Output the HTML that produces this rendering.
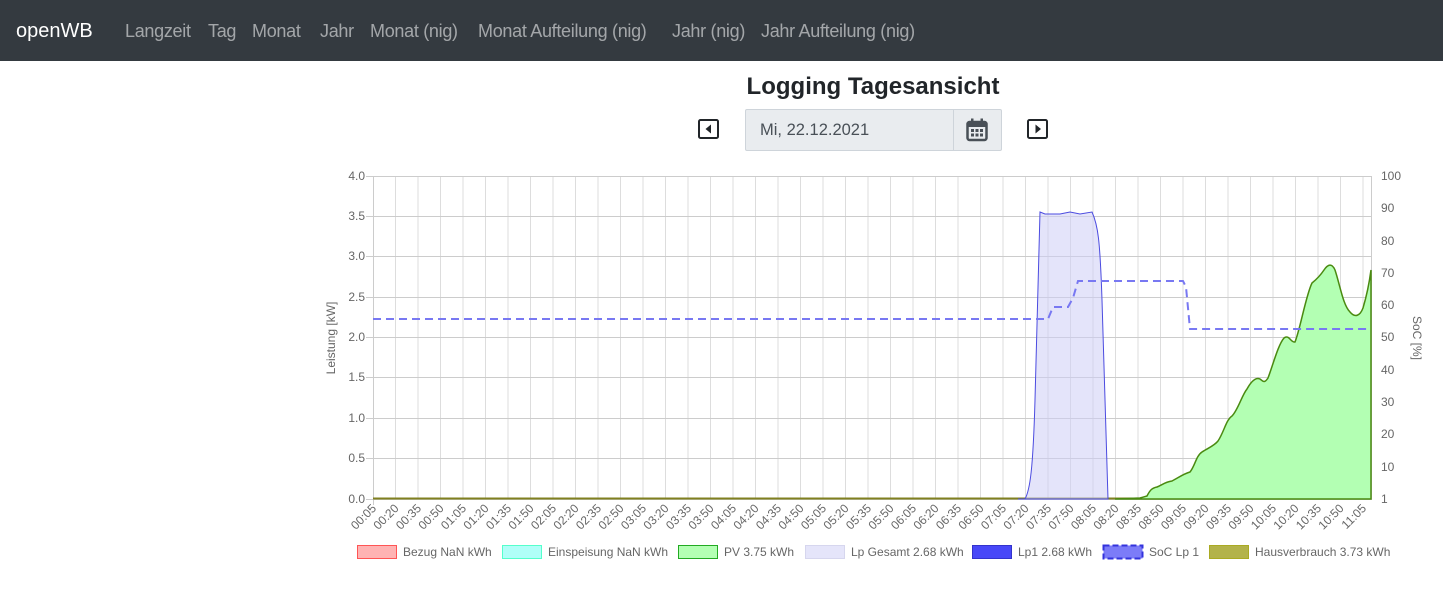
<!DOCTYPE html>
<html><head><meta charset="utf-8">
<style>
body{margin:0;width:1443px;height:610px;background:#fff;font-family:"Liberation Sans",sans-serif;position:relative;overflow:hidden}
.nav{position:absolute;left:0;top:0;width:1443px;height:61px;background:#343a40}
.nav span{position:absolute;top:21px;font-size:18px;color:rgba(255,255,255,.55);white-space:nowrap;letter-spacing:-0.3px}
.nav .brand{color:#fff;font-size:20px;top:20px;letter-spacing:0}
h1{position:absolute;left:0;width:1746px;text-align:center;top:73px;margin:0;font-size:24px;font-weight:bold;color:#212529}
.date{position:absolute;left:745px;top:109px;width:255px;height:40px;border:1px solid #ced4da;background:#e9ecef;border-radius:2px}
.date .t{position:absolute;left:14px;top:11px;font-size:16.5px;color:#495057}
.date .d{position:absolute;left:207px;top:0;width:1px;height:40px;background:#ced4da}
</style></head><body>
<div class="nav">
<span class="brand" style="left:16px">openWB</span>
<span style="left:125px">Langzeit</span>
<span style="left:208px">Tag</span>
<span style="left:252px">Monat</span>
<span style="left:320px">Jahr</span>
<span style="left:370px">Monat (nig)</span>
<span style="left:478px">Monat Aufteilung (nig)</span>
<span style="left:672px">Jahr (nig)</span>
<span style="left:761px">Jahr Aufteilung (nig)</span>
</div>
<h1>Logging Tagesansicht</h1>
<svg style="position:absolute;left:698px;top:119px" width="22" height="21" viewBox="0 0 22 21"><rect x="1" y="1" width="19" height="18" rx="1.5" fill="none" stroke="#212529" stroke-width="2"/><path d="M13 5.5 L7.5 10 L13 14.5Z" fill="#212529"/></svg>
<div class="date"><span class="t">Mi, 22.12.2021</span><div class="d"></div>
<svg style="position:absolute;left:220px;top:8px" width="22" height="24" viewBox="0 0 22 24"><rect x="1.5" y="4" width="19" height="18" rx="2" fill="none" stroke="#495057" stroke-width="2.5"/><rect x="1.5" y="4" width="19" height="5" fill="#495057"/><rect x="5" y="0.5" width="2.5" height="5" fill="#495057"/><rect x="14.5" y="0.5" width="2.5" height="5" fill="#495057"/><g fill="#495057"><rect x="5" y="11" width="3" height="3"/><rect x="9.5" y="11" width="3" height="3"/><rect x="14" y="11" width="3" height="3"/><rect x="5" y="15.5" width="3" height="3"/><rect x="9.5" y="15.5" width="3" height="3"/><rect x="14" y="15.5" width="3" height="3"/></g></svg>
</div>
<svg style="position:absolute;left:1027px;top:119px" width="22" height="21" viewBox="0 0 22 21"><rect x="1" y="1" width="19" height="18" rx="1.5" fill="none" stroke="#212529" stroke-width="2"/><path d="M8.5 5.5 L14 10 L8.5 14.5Z" fill="#212529"/></svg>

<svg style="position:absolute;left:0;top:0" width="1443" height="610" font-family="Liberation Sans, sans-serif" font-size="12" fill="#666">
<g stroke="#ddd" stroke-width="1">
<path d="M395.5 176V499M418 176V499M440.5 176V499M463 176V499M485.5 176V499M508 176V499M530.5 176V499M553 176V499M575.5 176V499M598 176V499M620.5 176V499M643 176V499M665.5 176V499M688 176V499M710.5 176V499M733 176V499M755.5 176V499M778 176V499M800.5 176V499M823 176V499M845.5 176V499M868 176V499M890.5 176V499M913 176V499M935.5 176V499M958 176V499M980.5 176V499M1003 176V499M1025.5 176V499M1048 176V499M1070.5 176V499M1093 176V499M1115.5 176V499M1138 176V499M1160.5 176V499M1183 176V499M1205.5 176V499M1228 176V499M1250.5 176V499M1273 176V499M1295.5 176V499M1318 176V499M1340.5 176V499M1363 176V499"/>
</g>
<g stroke="#ccc" stroke-width="1">
<path d="M366 176.5H1372M366 216.5H1372M366 256.5H1372M366 297.5H1372M366 337.5H1372M366 377.5H1372M366 418.5H1372M366 458.5H1372M366 499.5H1372"/>
<path d="M373.5 176V505M1371.5 176V499"/>
</g>
<path d="M373 498.5H1371" stroke="#808020" stroke-width="2"/>
<path d="M1018,499 L1025,499 C1030,490 1033,470 1035,400 L1040,212 L1045,214 L1060,214 L1070,212 L1080,214 L1092,212 C1098,225 1100,240 1102,300 L1108,499 Z" fill="rgba(205,205,245,0.55)" stroke="#4b4be0" stroke-width="1"/>
<path d="M1115,499 L1140,498 L1147,496 C1150,490 1152,488 1157,487 C1162,485 1165,482 1172,481 C1178,478 1183,474 1190,472 C1195,466 1196,456 1202,452 C1208,448 1214,446 1218,441 C1224,432 1226,420 1232,416 C1238,410 1242,395 1247,389 C1252,380 1256,377 1260,379 C1263,381 1264,384 1268,378 C1273,365 1278,345 1284,338 C1289,334 1291,343 1295,342 C1300,330 1306,295 1312,283 C1317,279 1320,276 1324,270 C1328,264 1332,263 1335,270 C1340,285 1343,305 1350,312 C1355,318 1360,316 1363,308 C1366,298 1369,285 1371,270 L1371,499 Z" fill="#b3ffb3" stroke="#4a8a10" stroke-width="1.5"/>
<path d="M373,319 L1048,319 L1053,307 L1068,307 L1073,298 L1078,281 L1183,281 L1186,287 L1190,329 L1371,329" fill="none" stroke="#7878f2" stroke-width="2" stroke-dasharray="8 5"/>
<g text-anchor="end">
<text x="365" y="180">4.0</text><text x="365" y="220">3.5</text><text x="365" y="260">3.0</text><text x="365" y="301">2.5</text><text x="365" y="341">2.0</text><text x="365" y="381">1.5</text><text x="365" y="422">1.0</text><text x="365" y="462">0.5</text><text x="365" y="503">0.0</text>
</g>
<g>
<text x="1381" y="180">100</text><text x="1381" y="212">90</text><text x="1381" y="245">80</text><text x="1381" y="277">70</text><text x="1381" y="309">60</text><text x="1381" y="341">50</text><text x="1381" y="374">40</text><text x="1381" y="406">30</text><text x="1381" y="438">20</text><text x="1381" y="471">10</text><text x="1381" y="503">1</text>
</g>
<text transform="translate(335,338) rotate(-90)" text-anchor="middle">Leistung [kW]</text>
<text transform="translate(1413,338) rotate(90)" text-anchor="middle">SoC [%]</text>
<g text-anchor="end">
<text transform="translate(377,509) rotate(-45)">00:05</text><text transform="translate(399.5,509) rotate(-45)">00:20</text><text transform="translate(422,509) rotate(-45)">00:35</text><text transform="translate(444.5,509) rotate(-45)">00:50</text><text transform="translate(467,509) rotate(-45)">01:05</text><text transform="translate(489.5,509) rotate(-45)">01:20</text><text transform="translate(512,509) rotate(-45)">01:35</text><text transform="translate(534.5,509) rotate(-45)">01:50</text><text transform="translate(557,509) rotate(-45)">02:05</text><text transform="translate(579.5,509) rotate(-45)">02:20</text><text transform="translate(602,509) rotate(-45)">02:35</text><text transform="translate(624.5,509) rotate(-45)">02:50</text><text transform="translate(647,509) rotate(-45)">03:05</text><text transform="translate(669.5,509) rotate(-45)">03:20</text><text transform="translate(692,509) rotate(-45)">03:35</text><text transform="translate(714.5,509) rotate(-45)">03:50</text><text transform="translate(737,509) rotate(-45)">04:05</text><text transform="translate(759.5,509) rotate(-45)">04:20</text><text transform="translate(782,509) rotate(-45)">04:35</text><text transform="translate(804.5,509) rotate(-45)">04:50</text><text transform="translate(827,509) rotate(-45)">05:05</text><text transform="translate(849.5,509) rotate(-45)">05:20</text><text transform="translate(872,509) rotate(-45)">05:35</text><text transform="translate(894.5,509) rotate(-45)">05:50</text><text transform="translate(917,509) rotate(-45)">06:05</text><text transform="translate(939.5,509) rotate(-45)">06:20</text><text transform="translate(962,509) rotate(-45)">06:35</text><text transform="translate(984.5,509) rotate(-45)">06:50</text><text transform="translate(1007,509) rotate(-45)">07:05</text><text transform="translate(1029.5,509) rotate(-45)">07:20</text><text transform="translate(1052,509) rotate(-45)">07:35</text><text transform="translate(1074.5,509) rotate(-45)">07:50</text><text transform="translate(1097,509) rotate(-45)">08:05</text><text transform="translate(1119.5,509) rotate(-45)">08:20</text><text transform="translate(1142,509) rotate(-45)">08:35</text><text transform="translate(1164.5,509) rotate(-45)">08:50</text><text transform="translate(1187,509) rotate(-45)">09:05</text><text transform="translate(1209.5,509) rotate(-45)">09:20</text><text transform="translate(1232,509) rotate(-45)">09:35</text><text transform="translate(1254.5,509) rotate(-45)">09:50</text><text transform="translate(1277,509) rotate(-45)">10:05</text><text transform="translate(1299.5,509) rotate(-45)">10:20</text><text transform="translate(1322,509) rotate(-45)">10:35</text><text transform="translate(1344.5,509) rotate(-45)">10:50</text><text transform="translate(1367,509) rotate(-45)">11:05</text>
</g>
<g stroke-width="1">
<rect x="357.5" y="545.5" width="39" height="13" fill="#ffb3b3" stroke="#f55"/>
<rect x="502.5" y="545.5" width="39" height="13" fill="#b0fff8" stroke="#5fc"/>
<rect x="678.5" y="545.5" width="39" height="13" fill="#b3ffb3" stroke="#2a2"/>
<rect x="805.5" y="545.5" width="39" height="13" fill="#e5e5fa" stroke="#d6d6ee"/>
<rect x="972.5" y="545.5" width="39" height="13" fill="#4848f8" stroke="#33c"/>
<rect x="1103.5" y="545.5" width="39" height="13" fill="#7c7cf8" stroke="#33d" stroke-dasharray="6 3" stroke-width="2"/>
<rect x="1209.5" y="545.5" width="39" height="13" fill="#b3b34a" stroke="#aa2"/>
</g>
<text x="403" y="556">Bezug NaN kWh</text>
<text x="548" y="556">Einspeisung NaN kWh</text>
<text x="724" y="556">PV 3.75 kWh</text>
<text x="851" y="556">Lp Gesamt 2.68 kWh</text>
<text x="1018" y="556">Lp1 2.68 kWh</text>
<text x="1149" y="556">SoC Lp 1</text>
<text x="1255" y="556">Hausverbrauch 3.73 kWh</text>
</svg>
</body></html>
